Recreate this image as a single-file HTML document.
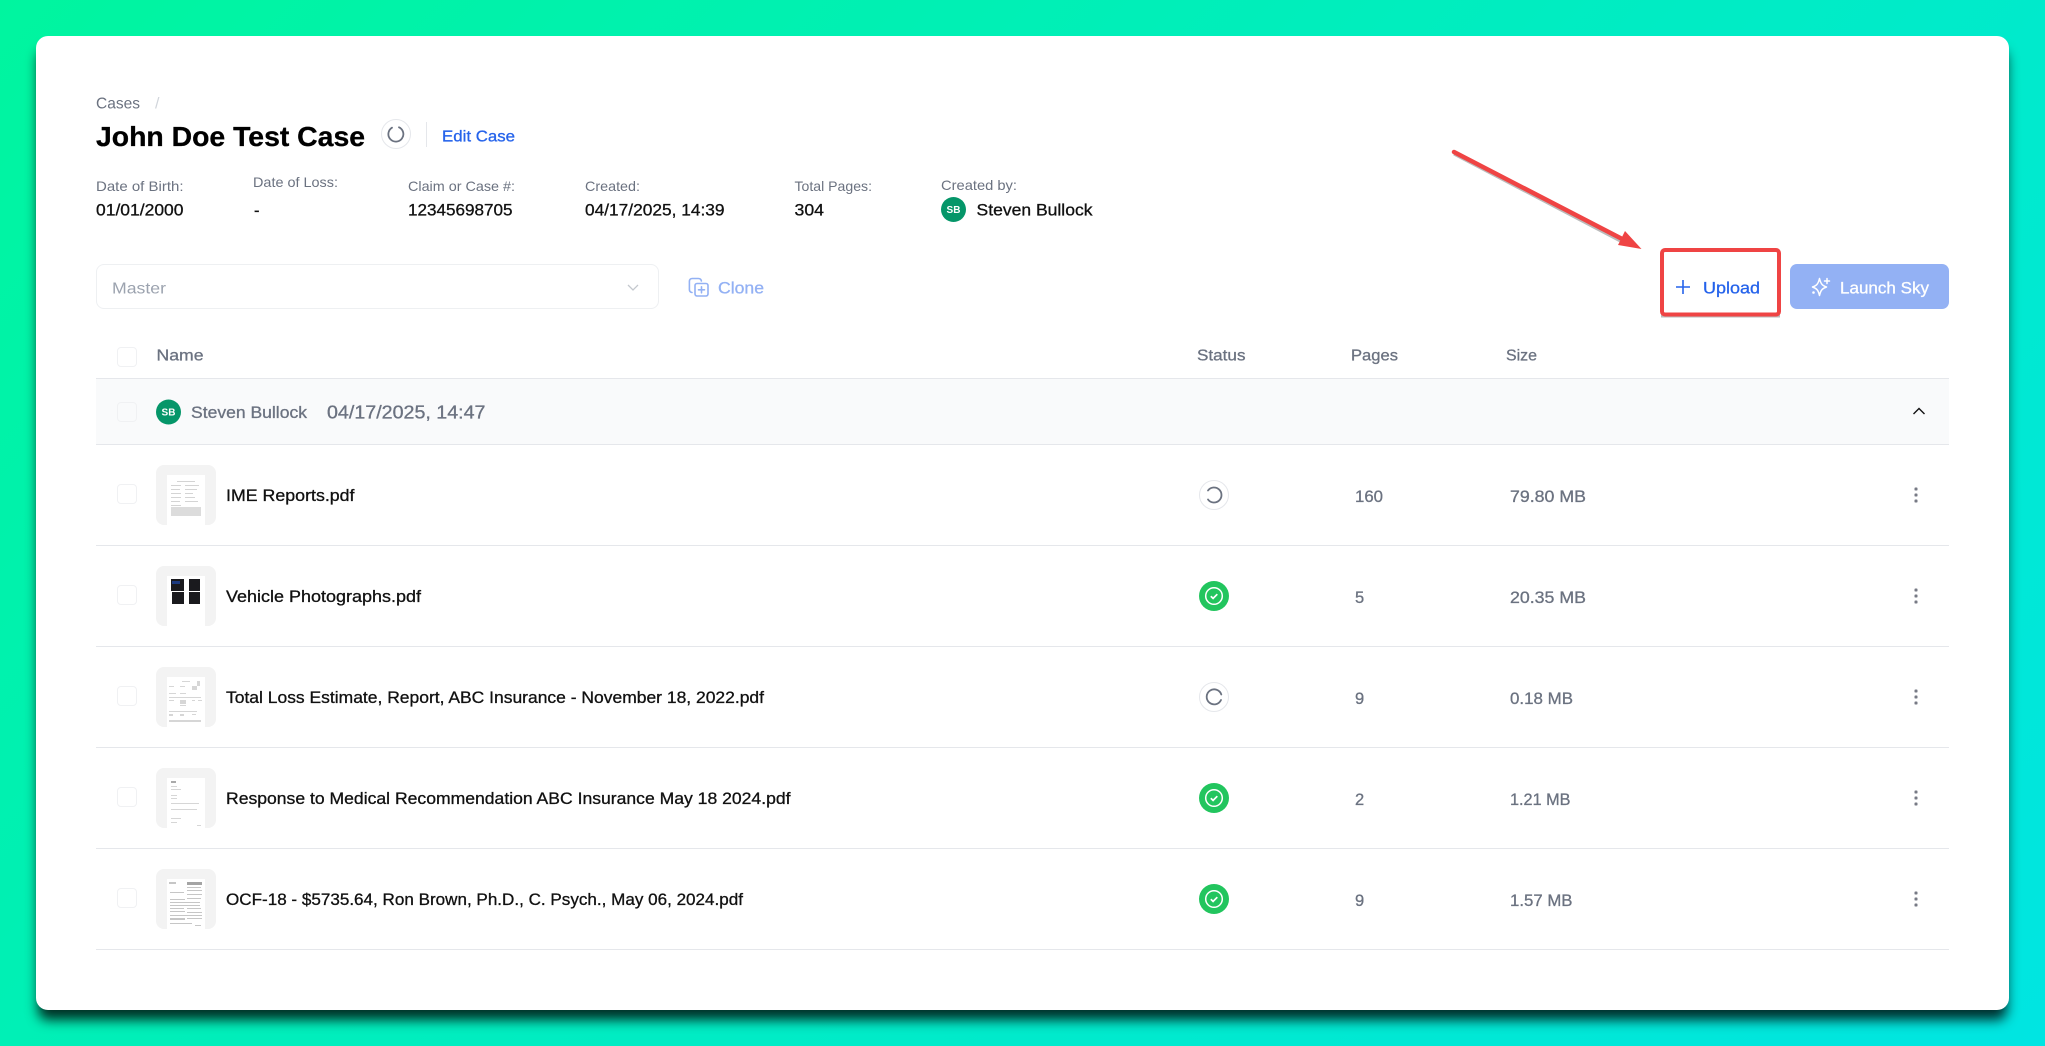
<!DOCTYPE html>
<html lang="en"><head><meta charset="utf-8"><title>John Doe Test Case</title>
<style>
html,body{margin:0;padding:0;width:2045px;height:1046px;overflow:hidden}
body{background:linear-gradient(135deg,#00f59f 0%,#00e5e2 100%);position:relative;font-family:"Liberation Sans",sans-serif}
.card{position:absolute;left:36px;top:36px;width:1973px;height:974px;background:#fff;border-radius:12px;box-shadow:0 12px 12px -2px rgba(0,0,0,.8)}
.abs{position:absolute;box-sizing:border-box}
.line{position:absolute;left:96px;width:1853px;height:1px;background:#e5e7eb}
.cb{position:absolute;left:116.500px;width:20px;height:20px;box-sizing:border-box;border:1px solid #f0f1f3;border-radius:4px}
.thumb{position:absolute;left:156px;width:60px;height:60px;background:#f3f3f3;border-radius:8px}
svg{position:absolute;left:0;top:0}
text{font-family:"Liberation Sans",sans-serif}
.m{stroke:currentColor;stroke-width:.3px}
</style></head><body>
<div class="card"></div>
<div class="abs" style="left:96px;top:264px;width:563px;height:45px;border:1px solid #eef0f2;border-radius:8px"></div>
<div class="abs" style="left:1790px;top:264px;width:159px;height:45px;background:#93b1f4;border-radius:7px"></div>
<div class="abs" style="left:96px;top:378px;width:1853px;height:67px;background:#f9fafb"></div>
<div class="line" style="top:378px"></div><div class="line" style="top:444px"></div><div class="line" style="top:545px"></div><div class="line" style="top:646px"></div><div class="line" style="top:747px"></div><div class="line" style="top:848px"></div><div class="line" style="top:949px"></div>
<div class="cb" style="top:347px"></div><div class="cb" style="top:402px"></div><div class="cb" style="top:484px"></div><div class="cb" style="top:585px"></div><div class="cb" style="top:686px"></div><div class="cb" style="top:787px"></div><div class="cb" style="top:888px"></div>
<div class="thumb" style="top:465px"></div><div class="thumb" style="top:566px"></div><div class="thumb" style="top:667px"></div><div class="thumb" style="top:768px"></div><div class="thumb" style="top:869px"></div>
<svg width="2045" height="1046" viewBox="0 0 2045 1046" xmlns="http://www.w3.org/2000/svg">
<!-- header -->
<text x="96" y="108.500" font-size="16" fill="#6b7280" textLength="44" lengthAdjust="spacingAndGlyphs">Cases</text>
<text x="155" y="108.500" font-size="16" fill="#d1d5db">/</text>
<text x="96" y="146" font-size="28" font-weight="700" fill="#000" stroke="#000" stroke-width=".3" textLength="269" lengthAdjust="spacingAndGlyphs">John Doe Test Case</text>
<circle cx="396" cy="134" r="14.500" fill="#fff" stroke="#e5e7eb"/>
<path d="M399 127.300A7.500 7.500 0 1 1 392 127.700" fill="none" stroke="#6b7280" stroke-width="1.800" stroke-linecap="round"/>
<rect x="426" y="122" width="1" height="25" fill="#e5e7eb"/>
<text x="442" y="141.500" font-size="16" fill="#2563eb" class="m" style="color:#2563eb" textLength="73" lengthAdjust="spacingAndGlyphs">Edit Case</text>
<g font-size="14" fill="#6b7280">
<text x="96" y="191" textLength="87.500" lengthAdjust="spacingAndGlyphs">Date of Birth:</text>
<text x="253" y="187" textLength="85" lengthAdjust="spacingAndGlyphs">Date of Loss:</text>
<text x="408" y="191" textLength="107" lengthAdjust="spacingAndGlyphs">Claim or Case #:</text>
<text x="585" y="191" textLength="55" lengthAdjust="spacingAndGlyphs">Created:</text>
<text x="794.500" y="191" textLength="77.500" lengthAdjust="spacingAndGlyphs">Total Pages:</text>
<text x="941" y="190" textLength="76" lengthAdjust="spacingAndGlyphs">Created by:</text>
</g>
<g font-size="16.500" fill="#111" class="m" style="color:#111">
<text x="96" y="215.500" textLength="87.500" lengthAdjust="spacingAndGlyphs">01/01/2000</text>
<text x="254" y="216">-</text>
<text x="408" y="215.500" textLength="104.500" lengthAdjust="spacingAndGlyphs">12345698705</text>
<text x="585" y="215.500" textLength="139.500" lengthAdjust="spacingAndGlyphs">04/17/2025, 14:39</text>
<text x="794.500" y="215.500" textLength="29.500" lengthAdjust="spacingAndGlyphs">304</text>
<text x="976.500" y="215.500" textLength="116" lengthAdjust="spacingAndGlyphs">Steven Bullock</text>
</g>
<circle cx="953.500" cy="209.500" r="12.500" fill="#059669"/>
<text x="953.500" y="213" font-size="10" font-weight="700" fill="#fff" text-anchor="middle">SB</text>
<!-- toolbar -->
<text x="112" y="293.500" font-size="16" fill="#9ca3af" textLength="54" lengthAdjust="spacingAndGlyphs">Master</text>
<path d="M628 285l5 5 5-5" fill="none" stroke="#c4c8ce" stroke-width="1.300"/>
<g fill="none" stroke="#93b1f4" stroke-width="1.600" stroke-linejoin="round" stroke-linecap="round">
<path d="M692 292.500c-1.800-.3-2.600-1.300-2.600-3v-8c0-2 1-3 3-3h6c1.700 0 2.700.8 3 2.500"/><rect x="695" y="283.500" width="13" height="12.500" rx="2"/><path d="M701.500 286.800v6M698.500 289.800h6"/>
</g>
<text x="718" y="293.500" font-size="17" fill="#93b1f4" class="m" style="color:#93b1f4" textLength="46" lengthAdjust="spacingAndGlyphs">Clone</text>
<path d="M1683 280v14M1676 287h14" stroke="#2563eb" stroke-width="1.600" fill="none"/>
<text x="1703" y="293.500" font-size="17" fill="#2563eb" class="m" style="color:#2563eb" textLength="57" lengthAdjust="spacingAndGlyphs">Upload</text>
<g fill="none" stroke="#fff" stroke-width="1.500" stroke-linejoin="round">
<path d="M1819.500 278.500c1.300 5.500 2.800 7 7 8.500-4.200 1.500-5.700 3-7 8.500-1.300-5.500-2.800-7-7-8.500 4.200-1.500 5.700-3 7-8.500z"/>
<path d="M1827 278.500v5M1824.500 281h5" stroke-linecap="round"/>
</g>
<circle cx="1813.500" cy="292.500" r="1.300" fill="#fff"/>
<text x="1840" y="293.500" font-size="17" fill="#fff" class="m" style="color:#fff" textLength="89" lengthAdjust="spacingAndGlyphs">Launch Sky</text>
<!-- arrow + box -->
<g opacity=".4">
<path d="M1454 154L1628 245" stroke="#555" stroke-width="3" fill="none"/>
<path d="M1661 316H1780" stroke="#555" stroke-width="3" fill="none"/>
</g>
<path d="M1454 152L1628 242" stroke="#ef4444" stroke-width="4.500" fill="none" stroke-linecap="round"/>
<path d="M1641.500 249L1625 231 1618 245z" fill="#ef4444"/>
<rect x="1662" y="250" width="117" height="64.500" rx="3" fill="none" stroke="#ef4444" stroke-width="4"/>
<!-- table header -->
<g font-size="16" fill="#6b7280" class="m" style="color:#6b7280">
<text x="156.500" y="360.500" textLength="47" lengthAdjust="spacingAndGlyphs">Name</text>
<text x="1197" y="360.500" textLength="48.500" lengthAdjust="spacingAndGlyphs">Status</text>
<text x="1351" y="360.500" textLength="47" lengthAdjust="spacingAndGlyphs">Pages</text>
<text x="1506" y="360.500" textLength="31" lengthAdjust="spacingAndGlyphs">Size</text>
<text x="191" y="418" font-size="16.500" textLength="116" lengthAdjust="spacingAndGlyphs">Steven Bullock</text>
<text x="327" y="418.500" font-size="18" textLength="158.500" lengthAdjust="spacingAndGlyphs">04/17/2025, 14:47</text>
</g>
<circle cx="168.500" cy="412" r="12.500" fill="#059669"/>
<text x="168.500" y="415.500" font-size="10" font-weight="700" fill="#fff" text-anchor="middle">SB</text>
<path d="M1913.500 414l5.500-5.500 5.500 5.500" fill="none" stroke="#111" stroke-width="1.400"/>
<!-- rows -->
<g font-size="16.500" fill="#111" class="m" style="color:#111">
<text x="226" y="501" textLength="128.500" lengthAdjust="spacingAndGlyphs">IME Reports.pdf</text>
<text x="226" y="602" textLength="195" lengthAdjust="spacingAndGlyphs">Vehicle Photographs.pdf</text>
<text x="226" y="703" textLength="538" lengthAdjust="spacingAndGlyphs">Total Loss Estimate, Report, ABC Insurance - November 18, 2022.pdf</text>
<text x="226" y="804" textLength="564.500" lengthAdjust="spacingAndGlyphs">Response to Medical Recommendation ABC Insurance May 18 2024.pdf</text>
<text x="226" y="905" textLength="517" lengthAdjust="spacingAndGlyphs">OCF-18 - $5735.64, Ron Brown, Ph.D., C. Psych., May 06, 2024.pdf</text>
</g>
<g font-size="16.500" fill="#6b7280" class="m" style="color:#6b7280">
<text x="1355" y="502" textLength="28" lengthAdjust="spacingAndGlyphs">160</text>
<text x="1510" y="502" textLength="76" lengthAdjust="spacingAndGlyphs">79.80 MB</text>
<text x="1355" y="603">5</text>
<text x="1510" y="603" textLength="76" lengthAdjust="spacingAndGlyphs">20.35 MB</text>
<text x="1355" y="704">9</text>
<text x="1510" y="704" textLength="63" lengthAdjust="spacingAndGlyphs">0.18 MB</text>
<text x="1355" y="805">2</text>
<text x="1510" y="805" textLength="60.500" lengthAdjust="spacingAndGlyphs">1.21 MB</text>
<text x="1355" y="906">9</text>
<text x="1510" y="906" textLength="62.500" lengthAdjust="spacingAndGlyphs">1.57 MB</text>
</g>
<!-- status icons -->
<g fill="none" stroke-linecap="round">
<circle cx="1214" cy="495" r="14.500" fill="#fff" stroke="#e5e7eb"/>
<path d="M1208 490.500A7.500 7.500 0 1 1 1208 499.500" stroke="#6b7280" stroke-width="1.800"/>
<circle cx="1214" cy="697" r="14.500" fill="#fff" stroke="#e5e7eb"/>
<path d="M1221.300 694.500A7.500 7.500 0 1 0 1221 700" stroke="#6b7280" stroke-width="1.800"/>
</g>
<g id="ok">
<circle cx="1214" cy="596" r="15" fill="#22c55e"/><circle cx="1214" cy="596" r="8.300" fill="none" stroke="#fff" stroke-width="1.500"/><path d="M1210.800 596.200l2.300 2.200 4.200-4.200" fill="none" stroke="#fff" stroke-width="1.700"/>
<circle cx="1214" cy="798" r="15" fill="#22c55e"/><circle cx="1214" cy="798" r="8.300" fill="none" stroke="#fff" stroke-width="1.500"/><path d="M1210.800 798.200l2.300 2.200 4.200-4.200" fill="none" stroke="#fff" stroke-width="1.700"/>
<circle cx="1214" cy="899" r="15" fill="#22c55e"/><circle cx="1214" cy="899" r="8.300" fill="none" stroke="#fff" stroke-width="1.500"/><path d="M1210.800 899.200l2.300 2.200 4.200-4.200" fill="none" stroke="#fff" stroke-width="1.700"/>
</g>
<!-- kebabs -->
<g fill="#777a85">
<rect x="1914.500" y="487.500" width="3" height="3" rx=".8"/><rect x="1914.500" y="493.500" width="3" height="3" rx=".8"/><rect x="1914.500" y="499.500" width="3" height="3" rx=".8"/>
<rect x="1914.500" y="588.500" width="3" height="3" rx=".8"/><rect x="1914.500" y="594.500" width="3" height="3" rx=".8"/><rect x="1914.500" y="600.500" width="3" height="3" rx=".8"/>
<rect x="1914.500" y="689.500" width="3" height="3" rx=".8"/><rect x="1914.500" y="695.500" width="3" height="3" rx=".8"/><rect x="1914.500" y="701.500" width="3" height="3" rx=".8"/>
<rect x="1914.500" y="790.500" width="3" height="3" rx=".8"/><rect x="1914.500" y="796.500" width="3" height="3" rx=".8"/><rect x="1914.500" y="802.500" width="3" height="3" rx=".8"/>
<rect x="1914.500" y="891.500" width="3" height="3" rx=".8"/><rect x="1914.500" y="897.500" width="3" height="3" rx=".8"/><rect x="1914.500" y="903.500" width="3" height="3" rx=".8"/>
</g>
<!-- thumbnails -->
<g fill="#fff">
<rect x="167" y="475" width="38" height="50"/><rect x="167" y="576" width="38" height="50"/><rect x="167" y="677" width="38" height="50"/><rect x="167" y="778" width="38" height="50"/><rect x="167" y="879" width="38" height="50"/>
</g>
<g fill="#d4d4d4">
<rect x="177" y="481" width="18" height="1"/><rect x="171" y="485" width="10" height="1"/><rect x="185" y="485" width="14" height="1"/><rect x="171" y="489" width="9" height="1"/><rect x="185" y="489" width="12" height="1"/><rect x="171" y="493" width="10" height="1"/><rect x="185" y="493" width="8" height="1"/><rect x="171" y="497" width="10" height="1"/><rect x="185" y="497" width="10" height="1"/><rect x="171" y="501" width="9" height="1"/><rect x="185" y="501" width="13" height="1"/><rect x="171" y="505" width="10" height="1"/>
<rect x="171" y="507" width="30" height="9" fill="#dcdcdc"/>
</g>
<g fill="#1a1a1e"><rect x="171" y="579" width="13" height="12"/><rect x="189" y="579" width="11" height="12"/><rect x="172" y="592" width="12" height="12"/><rect x="189" y="592" width="11" height="12"/></g>
<rect x="172" y="581" width="8" height="3" fill="#1c3a80"/>
<g fill="#d6d6d6">
<rect x="182" y="681" width="8" height="1"/><rect x="197" y="681" width="3" height="5"/><rect x="169" y="686" width="5" height="1"/><rect x="180" y="686" width="5" height="1"/><rect x="192" y="686" width="5" height="4"/><rect x="169" y="693" width="7" height="1"/><rect x="180" y="693" width="6" height="1"/><rect x="169" y="697" width="32" height="1"/><rect x="169" y="700" width="5" height="1"/><rect x="180" y="700" width="6" height="4"/><rect x="192" y="700" width="3" height="1"/><rect x="198" y="700" width="4" height="1"/><rect x="180" y="705" width="6" height="1"/><rect x="169" y="711" width="28" height="1"/><rect x="169" y="714" width="4" height="2"/><rect x="180" y="714" width="4" height="2"/><rect x="192" y="714" width="4" height="1"/><rect x="169" y="720" width="32" height="2"/>
</g>
<g fill="#d6d6d6">
<rect x="171" y="781" width="5" height="2" fill="#aaa"/><rect x="171" y="786" width="6" height="1"/><rect x="171" y="789" width="10" height="1"/><rect x="171" y="795" width="6" height="1"/><rect x="171" y="798" width="6" height="1"/><rect x="171" y="803" width="28" height="1"/><rect x="171" y="809" width="26" height="1"/><rect x="171" y="818" width="10" height="1"/><rect x="171" y="822" width="6" height="1"/><rect x="197" y="825" width="4" height="1"/>
</g>
<g fill="#c6c6c6">
<rect x="169" y="882" width="7" height="2"/><rect x="187" y="882" width="15" height="3" fill="#a4a4a4"/><rect x="187" y="887" width="14" height="1"/><rect x="187" y="890" width="15" height="1"/><rect x="170" y="892" width="14" height="1"/><rect x="187" y="894" width="15" height="1"/><rect x="187" y="898" width="14" height="1"/><rect x="170" y="899" width="15" height="1"/><rect x="170" y="902" width="30" height="1"/><rect x="170" y="905" width="30" height="1"/><rect x="170" y="908" width="14" height="1"/><rect x="187" y="908" width="14" height="1"/><rect x="170" y="911" width="15" height="1"/><rect x="187" y="912" width="15" height="1"/><rect x="170" y="915" width="32" height="1"/><rect x="170" y="918" width="15" height="2"/><rect x="187" y="918" width="15" height="1"/><rect x="170" y="923" width="22" height="1"/><rect x="195" y="925" width="6" height="1"/>
</g>
</svg>
</body></html>
